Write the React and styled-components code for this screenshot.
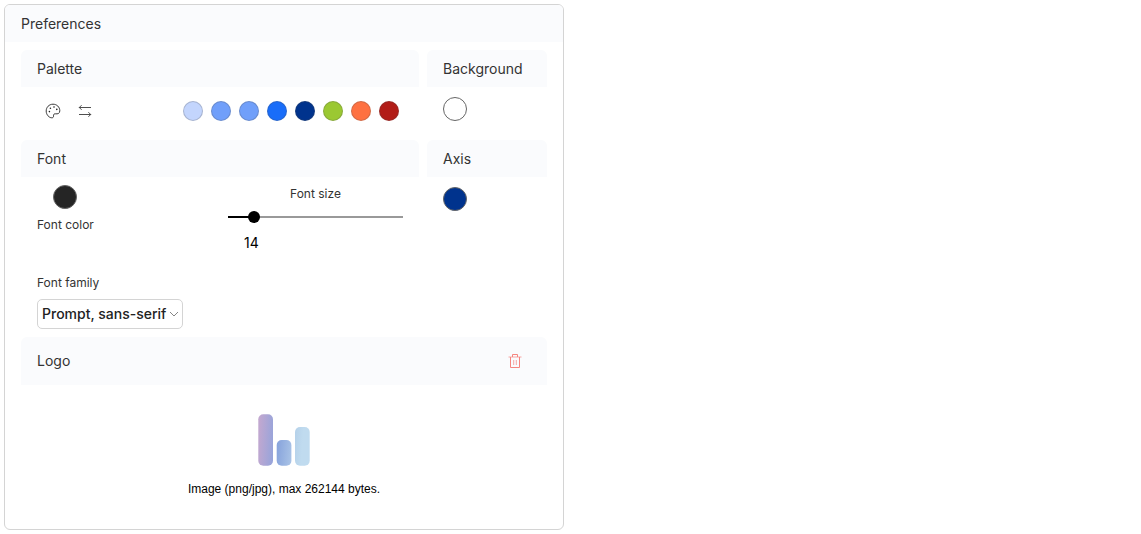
import React, { useState } from "react";
import styled, { createGlobalStyle } from "styled-components";

const GlobalStyle = createGlobalStyle`
  * {
    box-sizing: border-box;
  }
  body {
    margin: 0;
    padding: 4px;
    background: #fff;
    color: #333;
    font-family: Inter, sans-serif;
    font-size: 14px;
  }
`;

const Panel = styled.main`
  width: 100%;
  max-width: 560px;
  border: 1px solid #d4d4d4;
  border-radius: 6px;
  overflow: hidden;
`;

const PanelTitle = styled.h1`
  margin: 0;
  padding: 8px 16px;
  background: #fafbfd;
  font-size: 14px;
  font-weight: 400;
  line-height: 21px;
`;

const PanelBody = styled.div`
  display: grid;
  grid-template-columns: 1fr 120px;
  column-gap: 8px;
  padding: 8px 16px 0;
`;

const Section = styled.section`
  grid-column: ${(props) => (props.$wide ? "1 / -1" : "auto")};
  min-width: 0;
`;

const SectionHeader = styled.header`
  display: flex;
  align-items: center;
  justify-content: space-between;
  height: ${(props) => (props.$tall ? "48px" : "37px")};
  padding: 0 16px;
  border-radius: 6px 6px 0 0;
  background: #fafbfd;

  h2 {
    margin: 0;
    font-size: 14px;
    font-weight: 400;
    line-height: 20px;
  }
`;

const PaletteRow = styled.div`
  display: flex;
  align-items: center;
  justify-content: space-between;
  padding: 8px 20px 13px 16px;
`;

const Group = styled.div`
  display: flex;
  gap: ${(props) => props.$gap || "0"};
`;

const IconButton = styled.button`
  display: flex;
  align-items: center;
  justify-content: center;
  width: 32px;
  height: 32px;
  padding: 0;
  border: none;
  background: none;
  color: ${(props) => (props.$danger ? "#f5857f" : "#222")};
  cursor: pointer;
`;

const Swatch = styled.button`
  width: ${(props) => (props.$large ? "24px" : "20px")};
  height: ${(props) => (props.$large ? "24px" : "20px")};
  padding: 0;
  border: 1px solid ${(props) => (props.$large ? "#666" : "rgba(80, 80, 80, 0.25)")};
  border-radius: 50%;
  background: ${(props) => props.$color};
  cursor: pointer;
`;

const SwatchBox = styled.div`
  display: flex;
  padding: 10px 16px;
`;

const FontRow = styled.div`
  display: flex;
  justify-content: space-between;
  padding: 8px 16px 0;
`;

const FontColor = styled.div`
  display: flex;
  flex-direction: column;
  align-items: center;
  gap: 8px;
`;

const Label = styled.label`
  font-size: 12px;
  line-height: 16px;
`;

const FontSize = styled.div`
  display: flex;
  flex-direction: column;
  align-items: center;
  width: 175px;

  label {
    line-height: 18px;
  }

  output {
    align-self: flex-start;
    padding: 10px 16px 0;
    color: #000;
    line-height: 20px;
  }
`;

const Slider = styled.input`
  width: 100%;
  height: 12px;
  margin: 8px 0 0;
  appearance: none;
  background-color: transparent;
  background-position: center;
  background-repeat: no-repeat;
  background-size: 100% 2px;

  &::-webkit-slider-thumb {
    width: 12px;
    height: 12px;
    appearance: none;
    border-radius: 50%;
    background: #000;
  }
`;

const FamilyField = styled.div`
  display: flex;
  flex-direction: column;
  align-items: flex-start;
  gap: 8px;
  padding: 22px 16px 8px;
`;

const SelectBox = styled.div`
  position: relative;
  width: 146px;

  svg {
    position: absolute;
    top: 10px;
    right: 4px;
    pointer-events: none;
  }
`;

const Select = styled.select`
  width: 100%;
  height: 30px;
  padding: 0 4px 2px;
  appearance: none;
  border: 1px solid #d4d4d4;
  border-radius: 5px;
  background: #fff;
  color: #222;
  font-family: inherit;
  font-size: 14px;
  font-weight: 500;
`;

const Upload = styled.div`
  display: flex;
  flex-direction: column;
  align-items: center;
  gap: 15px;
  padding: 29px 0 32px;

  p {
    margin: 0;
    color: #000;
    font-family: "Liberation Sans", Arial, sans-serif;
    font-size: 12px;
    line-height: 16px;
  }
`;

const colors = [
  "#c3d5fd",
  "#709ffa",
  "#709ffa",
  "#196df9",
  "#00338d",
  "#9bc832",
  "#fe7141",
  "#b21c17",
];

const MIN_SIZE = 10;
const MAX_SIZE = 42;

const PaletteIcon = () => (
  <svg width="16" height="16" viewBox="0 0 16 16" fill="none" stroke="currentColor" strokeWidth="0.9">
    <path d="M8 1.2C4 1.2 1.2 4.3 1.2 8C1.2 11.7 4 14.8 6.8 14.8C8.3 14.8 8.7 13.8 8.5 12.8C8.3 11.5 9.2 10.6 10.6 10.8C12.6 11.1 14.8 10.6 14.8 7.8C14.8 4 11.8 1.2 8 1.2Z" />
    <g fill="currentColor" stroke="none">
      <circle cx="4.4" cy="8.6" r="0.8" />
      <circle cx="5.4" cy="5.2" r="0.8" />
      <circle cx="9" cy="4" r="0.8" />
      <circle cx="11.8" cy="6.4" r="0.8" />
    </g>
  </svg>
);

const SwapIcon = () => (
  <svg width="14" height="14" viewBox="0 0 14 14" fill="none" stroke="currentColor" strokeWidth="0.8">
    <path d="M13 3.5H1.3M3.6 1.2L1.3 3.5L3.6 5.8M1 10.5H12.7M10.4 8.2L12.7 10.5L10.4 12.8" />
  </svg>
);

const TrashIcon = () => (
  <svg width="14" height="16" viewBox="0 0 14 16" fill="none" stroke="currentColor">
    <path d="M0.5 4H13.5" strokeOpacity="0.7" />
    <path d="M4.5 4V1.5H9.5V4M2.5 4V14.5H11.5V4" />
    <path d="M5.7 7V12M8.3 7V12" strokeOpacity="0.7" />
  </svg>
);

const ChevronIcon = () => (
  <svg width="10" height="10" viewBox="0 0 10 10" fill="none" stroke="#666" strokeWidth="0.8">
    <path d="M1 3L5 7L9 3" />
  </svg>
);

const BarsLogo = () => (
  <svg width="52" height="52" viewBox="0 0 52 52" role="img" aria-label="Logo">
    <defs>
      <linearGradient id="bar1" x1="0" y1="0.4" x2="1" y2="0.6">
        <stop offset="0" stopColor="#c2a8d0" />
        <stop offset="1" stopColor="#98a4da" />
      </linearGradient>
      <linearGradient id="bar2" x1="0" y1="0.4" x2="1" y2="0.6">
        <stop offset="0" stopColor="#88a4dc" />
        <stop offset="1" stopColor="#a8c2e6" />
      </linearGradient>
      <linearGradient id="bar3" x1="0" y1="0.4" x2="1" y2="0.6">
        <stop offset="0" stopColor="#b6d2ea" />
        <stop offset="0.5" stopColor="#c0dbef" />
        <stop offset="1" stopColor="#c0dbef" />
      </linearGradient>
    </defs>
    <rect x="0.3" y="0.3" width="14.7" height="51.4" rx="5" fill="url(#bar1)" />
    <rect x="18.7" y="26" width="14.7" height="25.7" rx="5" fill="url(#bar2)" />
    <rect x="37" y="13" width="14.7" height="38.7" rx="5" fill="url(#bar3)" />
  </svg>
);

function App() {
  const [size, setSize] = useState(14);
  const [family, setFamily] = useState("Prompt, sans-serif");

  // stop of the dark part of the track, in percent
  const filled = ((size - MIN_SIZE) / (MAX_SIZE - MIN_SIZE)) * 100;

  return (
    <>
      <GlobalStyle />
      <Panel>
        <PanelTitle>Preferences</PanelTitle>
        <PanelBody>
          <Section>
            <SectionHeader>
              <h2>Palette</h2>
            </SectionHeader>
            <PaletteRow>
              <Group>
                <IconButton aria-label="Choose palette">
                  <PaletteIcon />
                </IconButton>
                <IconButton aria-label="Reverse palette">
                  <SwapIcon />
                </IconButton>
              </Group>
              <Group $gap="8px">
                {colors.map((color, i) => (
                  <Swatch key={i} $color={color} aria-label={`Color ${i + 1}`} />
                ))}
              </Group>
            </PaletteRow>
          </Section>

          <Section>
            <SectionHeader>
              <h2>Background</h2>
            </SectionHeader>
            <SwatchBox>
              <Swatch $large $color="#fff" aria-label="Background color" />
            </SwatchBox>
          </Section>

          <Section>
            <SectionHeader>
              <h2>Font</h2>
            </SectionHeader>
            <FontRow>
              <FontColor>
                <Swatch $large $color="#252525" id="font-color" />
                <Label htmlFor="font-color">Font color</Label>
              </FontColor>
              <FontSize>
                <Label htmlFor="font-size">Font size</Label>
                <Slider
                  id="font-size"
                  type="range"
                  min={MIN_SIZE}
                  max={MAX_SIZE}
                  value={size}
                  onChange={(e) => setSize(Number(e.target.value))}
                  style={{
                    backgroundImage: `linear-gradient(to right, #000 ${filled}%, #999 ${filled}%)`,
                  }}
                />
                <output htmlFor="font-size">{size}</output>
              </FontSize>
            </FontRow>
            <FamilyField>
              <Label htmlFor="font-family">Font family</Label>
              <SelectBox>
                <Select
                  id="font-family"
                  value={family}
                  onChange={(e) => setFamily(e.target.value)}
                >
                  <option>Prompt, sans-serif</option>
                </Select>
                <ChevronIcon />
              </SelectBox>
            </FamilyField>
          </Section>

          <Section>
            <SectionHeader>
              <h2>Axis</h2>
            </SectionHeader>
            <SwatchBox>
              <Swatch $large $color="#00338d" aria-label="Axis color" />
            </SwatchBox>
          </Section>

          <Section $wide>
            <SectionHeader $tall>
              <h2>Logo</h2>
              <IconButton $danger aria-label="Remove logo">
                <TrashIcon />
              </IconButton>
            </SectionHeader>
            <Upload>
              <BarsLogo />
              <p>Image (png/jpg), max 262144 bytes.</p>
            </Upload>
          </Section>
        </PanelBody>
      </Panel>
    </>
  );
}

export default App;
